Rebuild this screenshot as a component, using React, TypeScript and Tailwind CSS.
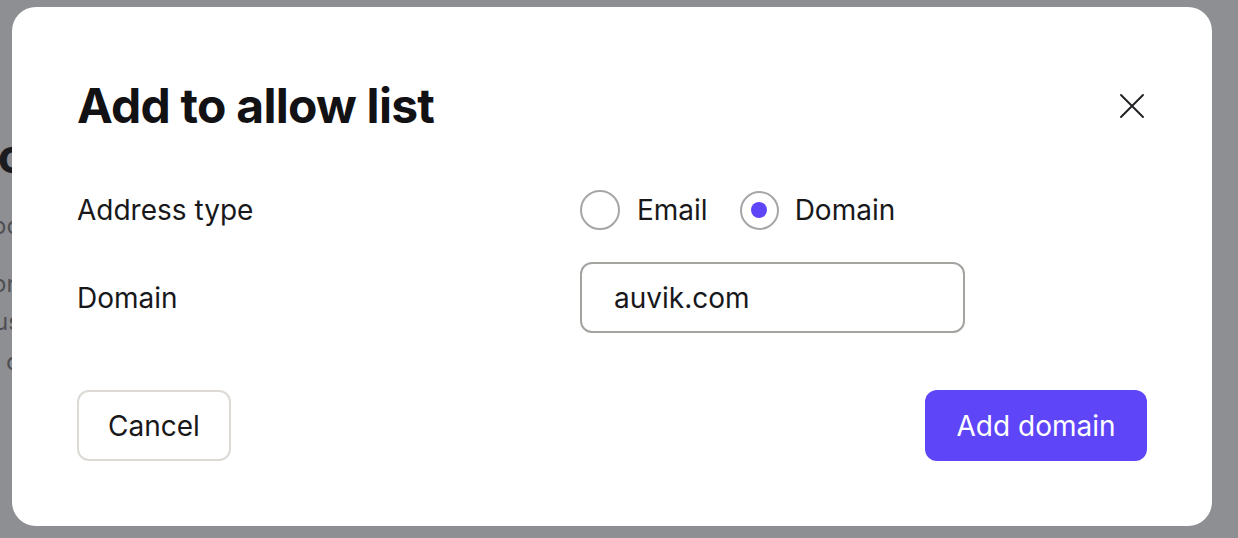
import React from "react";

export default function App() {
  const font = { fontFamily: "Inter, 'Noto Sans', sans-serif" };
  return (
    <div
      className="relative h-[538px] w-[1238px] overflow-hidden bg-[#8e8f93]"
      style={font}
    >
      {/* background page (dimmed) */}
      <div className="flex flex-col pt-[128px] text-[#4e4f54]">
        <div className="ml-[-37px] whitespace-nowrap text-[48px] font-bold leading-[56px] text-[#1c1c20]">
          Domains
        </div>
        <div className="ml-[-8px] mt-[27px] whitespace-nowrap text-[24px] leading-[30px]">
          ocks
        </div>
        <div className="ml-[-8px] mt-[28px] whitespace-nowrap text-[24px] leading-[30px]">
          on
        </div>
        <div className="ml-[-6px] mt-[8px] whitespace-nowrap text-[24px] leading-[30px]">
          us
        </div>
        <div className="ml-[6px] mt-[10px] whitespace-nowrap text-[24px] leading-[30px]">
          c
        </div>
      </div>

      {/* modal */}
      <div className="absolute left-[12px] top-[7px] flex h-[519px] w-[1200px] flex-col rounded-[24px] bg-white px-[65px] pb-[65px] pt-[71px] text-[#18181b]">
        <div className="flex h-[56px] items-center justify-between">
          <h1 className="text-[48px] font-bold leading-[56px] tracking-[-0.75px] text-[#121215]">
            Add to allow list
          </h1>
          <button className="mr-[1px] flex h-[28px] w-[28px] items-center justify-center">
            <svg width="28" height="28" viewBox="0 0 28 28" fill="none">
              <path
                d="M3 3 L25 25 M25 3 L3 25"
                stroke="#202024"
                strokeWidth="1.9"
                strokeLinecap="round"
              />
            </svg>
          </button>
        </div>

        <div className="mt-[56px] grid grid-cols-[503px_1fr] gap-y-[32px] text-[28px]">
          <div className="flex h-[40px] items-center">Address type</div>
          <div className="flex h-[40px] items-center">
            <label className="flex items-center">
              <span className="h-[40px] w-[40px] rounded-full border-2 border-[#a6a6a6]" />
              <span className="ml-[17px]">Email</span>
            </label>
            <label className="ml-[32px] flex items-center">
              <span className="flex h-[39px] w-[39px] items-center justify-center rounded-full border-2 border-[#a6a6a6]">
                <span className="h-[16px] w-[16px] rounded-full bg-[#5e45f8]" />
              </span>
              <span className="ml-[16px]">Domain</span>
            </label>
          </div>

          <div className="flex h-[71px] items-center">Domain</div>
          <div className="flex h-[71px] w-[385px] items-center rounded-[12px] border-2 border-[#a3a39f] px-[32px]">
            auvik.com
          </div>
        </div>

        <div className="mt-auto flex items-center justify-between text-[28px]">
          <button className="h-[71px] w-[154px] rounded-[12px] border-2 border-[#dddad6] text-[#18181b]">
            Cancel
          </button>
          <button className="h-[71px] w-[222px] rounded-[12px] bg-[#5e45f8] text-white">
            Add domain
          </button>
        </div>
      </div>
    </div>
  );
}
